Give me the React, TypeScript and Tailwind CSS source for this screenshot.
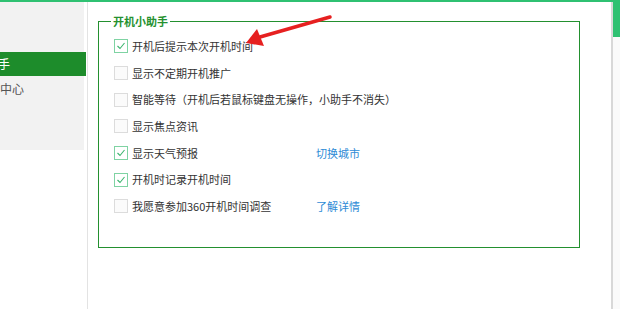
import React from 'react';

const OPTIONS = [
  { label: '开机后提示本次开机时间', checked: true },
  { label: '显示不定期开机推广', checked: false },
  { label: '智能等待（开机后若鼠标键盘无操作，小助手不消失）', checked: false },
  { label: '显示焦点资讯', checked: false },
  { label: '显示天气预报', checked: true, link: '切换城市' },
  { label: '开机时记录开机时间', checked: true },
  { label: '我愿意参加360开机时间调查', checked: false, link: '了解详情' },
];

function Box({ checked }: { checked: boolean }) {
  return (
    <span
      className={`flex h-[14px] w-[14px] shrink-0 items-center justify-center border ${
        checked ? 'border-[#7fd3a3] bg-white' : 'border-[#dcdcdc] bg-[#fbfbfb]'
      }`}
    >
      {checked ? (
        <svg width="10" height="10" viewBox="0 0 10 10">
          <polyline points="1.5,5 4,7.5 8.5,2" fill="none" stroke="#3cb46e" strokeWidth="1.1" />
        </svg>
      ) : null}
    </span>
  );
}

export default function App() {
  return (
    <div
      className="relative flex h-[309px] w-[620px] flex-col overflow-hidden bg-white text-[11px] text-[#333]"
      style={{ fontFamily: '"Noto Sans CJK SC", "Noto Sans", sans-serif' }}
    >
      <div className="h-[2px] w-full bg-[#2fc172]" />
      <div className="flex flex-1">
        {/* sidebar */}
        <div className="flex w-[88px] flex-col border-r border-[#e3e3e3]">
          <div className="flex h-[148px] w-[84px] flex-col bg-[#f2f2f2] pt-[50px]">
            <div className="flex h-[24px] w-[86px] items-center overflow-hidden bg-[#1d8c2b] text-[12px] text-white">
              <span className="-ml-[2px]">手</span>
            </div>
            <div className="flex h-[26px] items-center text-[12px] text-[#555]">
              <span>中心</span>
            </div>
          </div>
        </div>

        {/* main */}
        <div className="flex flex-1 flex-col pl-[10px] pt-[11px]">
          <fieldset className="h-[235px] w-[482px] border border-[#23902f] pl-[15px] pt-[4px]">
            <legend className="-ml-[3px] px-[2px] text-[11px] font-bold leading-[16px] text-[#25912f]">
              开机小助手
            </legend>
            {OPTIONS.map((o) => (
              <div key={o.label} className="flex h-[26.67px] items-center">
                <Box checked={o.checked} />
                <span className="ml-[4px] w-[184px] shrink-0 whitespace-nowrap">{o.label}</span>
                {o.link ? <span className="text-[#2e8bd6]">{o.link}</span> : null}
              </div>
            ))}
          </fieldset>
        </div>

        {/* right edge */}
        <div className="flex w-[9px] flex-col border-l-[2px] border-[#d8d8d8] bg-[#fafafa]">
          <div className="h-[35px] bg-[#2fc172]" />
        </div>
      </div>

      {/* red annotation arrow */}
      <svg className="absolute left-0 top-0" width="620" height="309" viewBox="0 0 620 309">
        <line x1="330" y1="17" x2="260" y2="37" stroke="#e62020" strokeWidth="3.5" strokeLinecap="round" />
        <polygon points="246,43 257,29 264,46" fill="#e62020" />
      </svg>
    </div>
  );
}
